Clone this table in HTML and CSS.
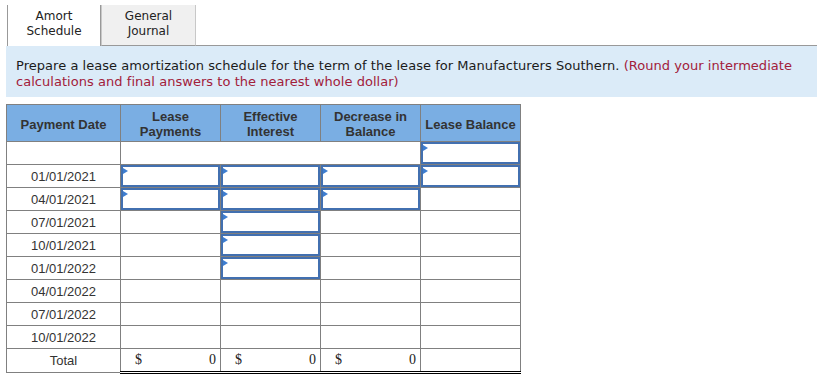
FILE: index.html
```html
<!DOCTYPE html>
<html>
<head>
<meta charset="utf-8">
<link rel="stylesheet" href="styles.css">
</head>
<body>
<div class="page">
  <div class="tabs">
    <div class="tab active">Amort<br>Schedule</div>
    <div class="tab">General<br>Journal</div>
    <div class="tab-rest"></div>
  </div>
  <div class="instructions">
    Prepare a lease amortization schedule for the term of the lease for Manufacturers Southern. <span class="note">(Round your intermediate calculations and final answers to the nearest whole dollar)</span>
  </div>
  <table class="sched">
    <colgroup>
      <col class="c1"><col class="c2"><col class="c2"><col class="c2"><col class="c2">
    </colgroup>
    <thead>
      <tr>
        <th><div class="h">Payment Date</div></th>
        <th><div class="h">Lease<br>Payments</div></th>
        <th><div class="h">Effective<br>Interest</div></th>
        <th><div class="h">Decrease in<br>Balance</div></th>
        <th><div class="h">Lease Balance</div></th>
      </tr>
    </thead>
    <tbody>
      <tr>
        <td><div class="cell"></div></td>
        <td colspan="3"><div class="cell"></div></td>
        <td><div class="inp"></div></td>
      </tr>
      <tr>
        <td><div class="cell date">01/01/2021</div></td>
        <td><div class="inp"></div></td>
        <td><div class="inp"></div></td>
        <td><div class="inp"></div></td>
        <td><div class="inp"></div></td>
      </tr>
      <tr>
        <td><div class="cell date">04/01/2021</div></td>
        <td><div class="inp"></div></td>
        <td><div class="inp"></div></td>
        <td><div class="inp"></div></td>
        <td><div class="cell"></div></td>
      </tr>
      <tr>
        <td><div class="cell date">07/01/2021</div></td>
        <td><div class="cell"></div></td>
        <td><div class="inp"></div></td>
        <td><div class="cell"></div></td>
        <td><div class="cell"></div></td>
      </tr>
      <tr>
        <td><div class="cell date">10/01/2021</div></td>
        <td><div class="cell"></div></td>
        <td><div class="inp"></div></td>
        <td><div class="cell"></div></td>
        <td><div class="cell"></div></td>
      </tr>
      <tr>
        <td><div class="cell date">01/01/2022</div></td>
        <td><div class="cell"></div></td>
        <td><div class="inp"></div></td>
        <td><div class="cell"></div></td>
        <td><div class="cell"></div></td>
      </tr>
      <tr>
        <td><div class="cell date">04/01/2022</div></td>
        <td><div class="cell"></div></td>
        <td><div class="cell"></div></td>
        <td><div class="cell"></div></td>
        <td><div class="cell"></div></td>
      </tr>
      <tr>
        <td><div class="cell date">07/01/2022</div></td>
        <td><div class="cell"></div></td>
        <td><div class="cell"></div></td>
        <td><div class="cell"></div></td>
        <td><div class="cell"></div></td>
      </tr>
      <tr>
        <td><div class="cell date">10/01/2022</div></td>
        <td><div class="cell"></div></td>
        <td><div class="cell"></div></td>
        <td><div class="cell"></div></td>
        <td><div class="cell"></div></td>
      </tr>
      <tr class="total">
        <td><div class="cell total-label">Total</div></td>
        <td class="tot"><div class="cell money"><span>$</span><span>0</span></div></td>
        <td class="tot"><div class="cell money"><span>$</span><span>0</span></div></td>
        <td class="tot"><div class="cell money"><span>$</span><span>0</span></div></td>
        <td class="tot"><div class="cell"></div></td>
      </tr>
    </tbody>
  </table>
</div>
</body>
</html>
```

FILE: styles.css
```css
html, body {
  margin: 0;
  padding: 0;
  background: #ffffff;
}

.page {
  padding: 5px 0 0 6px;
}

.tabs {
  display: flex;
  height: 40px;
  padding-left: 1px;
}

.tab {
  font-family: "DejaVu Sans", Verdana, sans-serif;
  font-size: 12px;
  line-height: 15px;
  color: #222;
  text-align: center;
  padding-top: 4px;
  box-sizing: border-box;
  height: 41px;
  width: 95px;
  background: #f0f0f0;
  border-left: 1px solid #c8c8c8;
  border-right: 1px solid #c8c8c8;
  border-bottom: 1px solid #999;
}

.tab.active {
  width: 94px;
  background: #ffffff;
  border-left: 1px solid #999;
  border-right: 1px solid #999;
  border-bottom: none;
}

.tab-rest {
  flex: 1;
  height: 41px;
  box-sizing: border-box;
  border-bottom: 1px solid #999;
}

.instructions {
  margin-top: 1px;
  background: #dbebf8;
  font-family: "DejaVu Sans", Verdana, sans-serif;
  font-size: 13px;
  line-height: 16px;
  letter-spacing: 0.04px;
  color: #1b1b1b;
  padding: 12px 10px 7px 10px;
  height: 32px;
}

.note {
  color: #a2203a;
}

.sched {
  margin-top: 7px;
  border-collapse: collapse;
  table-layout: fixed;
  width: 515px;
  font-family: "Liberation Sans", Arial, sans-serif;
  font-size: 13px;
  color: #333;
}

.c1 { width: 114px; }
.c2 { width: 100px; }

.sched th, .sched td {
  border: 1px solid #808080;
  padding: 0;
}

.sched th {
  background: #7aaee3;
  font-weight: bold;
}

.h {
  height: 36px;
  box-sizing: border-box;
  padding-top: 2px;
  display: flex;
  align-items: center;
  justify-content: center;
  text-align: center;
  line-height: 15px;
}

.cell {
  height: 22px;
  line-height: 22px;
}

.date {
  text-align: center;
  box-sizing: border-box;
  padding-top: 2px;
  line-height: 20px;
}

.total-label {
  text-align: center;
}

.inp {
  position: relative;
  height: 22px;
  box-sizing: border-box;
  border: 2px solid #4270b0;
}

.inp::before {
  content: "";
  position: absolute;
  left: 0;
  top: 1px;
  border-left: 5px solid #3d7dd0;
  border-top: 3px solid transparent;
  border-bottom: 3px solid transparent;
}

.sched tr.total td.tot {
  border-top: 1px solid #000;
  border-bottom: 3px double #000;
}

.money {
  display: flex;
  justify-content: space-between;
  padding: 0 4px 0 14px;
  font-family: "Liberation Serif", "Times New Roman", serif;
  font-size: 14px;
  color: #222;
}
```
